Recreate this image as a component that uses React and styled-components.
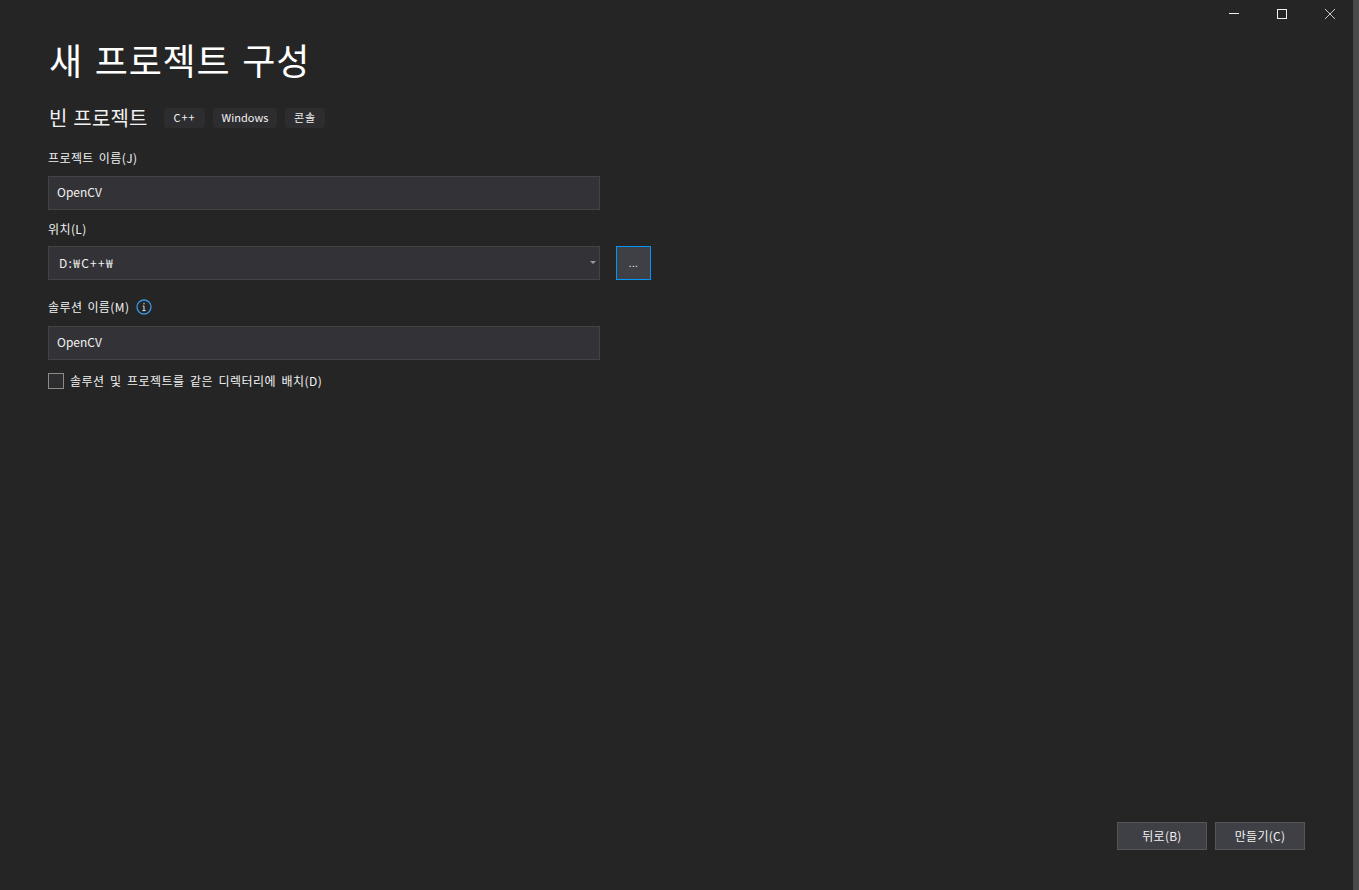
import React from "react";
import styled, { createGlobalStyle } from "styled-components";

const FONT = `"Noto Sans CJK KR", "Noto Sans", sans-serif`;

const Global = createGlobalStyle`
  html, body { margin: 0; padding: 0; background: #252526; }
  body { font-family: ${FONT}; color: #f1f1f1; overflow: hidden; }
  * { box-sizing: border-box; }
`;

const Window = styled.div`
  width: 1359px;
  height: 890px;
  background: #252526;
  display: flex;
  flex-direction: column;
  position: relative;
`;

const TitleBar = styled.div`
  position: absolute;
  top: 0;
  right: 5px;
  display: flex;
`;

const WinButton = styled.div`
  width: 48px;
  height: 28px;
  display: flex;
  align-items: center;
  justify-content: center;
`;

const Edge = styled.div`
  position: absolute;
  top: 0;
  right: 0;
  width: 6px;
  height: 100%;
  background: #4a4a4c;
`;

const Content = styled.main`
  flex: 1;
  padding: 35px 0 0 48px;
  display: flex;
  flex-direction: column;
`;

const Title = styled.h1`
  margin: 0 0 0 1px;
  font-size: 36px;
  line-height: 48px;
  font-weight: 400;
  letter-spacing: 0.8px;
  word-spacing: 3px;
  color: #fff;
`;

const Subtitle = styled.div`
  margin-top: 21px;
  display: flex;
  align-items: center;
  height: 28px;
`;

const SubName = styled.h2`
  margin: 0 8px 0 1px;
  font-size: 20px;
  line-height: 28px;
  font-weight: 400;
  letter-spacing: 0.2px;
  word-spacing: 1px;
  color: #f1f1f1;
  width: 107px;
  white-space: nowrap;
`;

const Tag = styled.span`
  width: ${p => p.$w}px;
  height: 20px;
  margin-right: 8px;
  border-radius: 4px;
  background: #2d2d30;
  font-size: 11px;
  line-height: 19px;
  text-align: center;
  letter-spacing: ${p => p.$spacing || 0}px;
  color: #f1f1f1;
`;

const Label = styled.label`
  display: flex;
  align-items: center;
  height: 18px;
  font-size: 12px;
  line-height: 18px;
  letter-spacing: 0.4px;
  word-spacing: 2px;
  color: #f1f1f1;
  margin-top: ${p => p.$top}px;
`;

const Field = styled.div`
  width: 552px;
  height: 34px;
  margin-top: ${p => p.$top}px;
  background: #333337;
  border: 1px solid #434346;
  padding: 0 8px 3px;
  display: flex;
  align-items: center;
  font-size: 12px;
  color: #f1f1f1;
`;

const LocationRow = styled.div`
  display: flex;
  margin-top: 8px;
  gap: 16px;
`;

const Combo = styled(Field)`
  margin-top: 0;
  padding: 0 3px 1px 10px;
  justify-content: space-between;
`;

const ComboValue = styled.span`
  letter-spacing: 1.3px;
`;

const Caret = styled.span`
  width: 0;
  height: 0;
  border-left: 3.5px solid transparent;
  border-right: 3.5px solid transparent;
  border-top: 3px solid #999;
`;

const Browse = styled.button`
  width: 35px;
  height: 34px;
  padding: 0;
  background: #3f3f46;
  border: 1px solid #0097fb;
  color: #f1f1f1;
  font: 10px/1 ${FONT};
  letter-spacing: 0.4px;
`;

const Info = styled.svg`
  margin-left: 7px;
`;

const CheckRow = styled.div`
  display: flex;
  align-items: center;
  gap: 6px;
  margin-top: 12px;
  font-size: 12px;
  line-height: 16px;
  letter-spacing: 0.45px;
  word-spacing: 2.4px;
  color: #f1f1f1;
`;

const CheckText = styled.span`
  padding-top: 1px;
`;

const Box = styled.span`
  width: 16px;
  height: 16px;
  background: #2d2d30;
  border: 1px solid #8a8a8a;
`;

const Footer = styled.footer`
  display: flex;
  justify-content: flex-end;
  gap: 8px;
  padding: 0 54px 40px 0;
`;

const ActionButton = styled.button`
  width: 90px;
  height: 28px;
  background: #3f3f46;
  border: 1px solid #555558;
  color: #f1f1f1;
  font: 12px/1 ${FONT};
  letter-spacing: 0.25px;
  padding: 0;
`;

export default function App() {
  return (
    <Window>
      <Global />
      <TitleBar>
        <WinButton>
          <svg width="12" height="12" viewBox="0 0 12 12"><path d="M1 5.5h10" stroke="#f1f1f1" fill="none" /></svg>
        </WinButton>
        <WinButton>
          <svg width="12" height="12" viewBox="0 0 12 12"><rect x="1.5" y="1.5" width="9" height="9" stroke="#f1f1f1" fill="none" /></svg>
        </WinButton>
        <WinButton>
          <svg width="12" height="12" viewBox="0 0 12 12"><path d="M1 1l10 10M11 1L1 11" stroke="#c8c8c8" fill="none" /></svg>
        </WinButton>
      </TitleBar>
      <Edge />
      <Content>
        <Title>새 프로젝트 구성</Title>
        <Subtitle>
          <SubName>빈 프로젝트</SubName>
          <Tag $w={41} $spacing={1}>C++</Tag>
          <Tag $w={64}>Windows</Tag>
          <Tag $w={40} $spacing={1}>콘솔</Tag>
        </Subtitle>
        <Label $top={17}>프로젝트 이름(J)</Label>
        <Field $top={9}>OpenCV</Field>
        <Label $top={10}>위치(L)</Label>
        <LocationRow>
          <Combo>
            <ComboValue>D:₩C++₩</ComboValue>
            <Caret />
          </Combo>
          <Browse>...</Browse>
        </LocationRow>
        <Label $top={18}>
          솔루션 이름(M)
          <Info width="16" height="16" viewBox="0 0 16 16">
            <circle cx="8" cy="8" r="7" fill="none" stroke="#3794e0" strokeWidth="1.3" />
            <path d="M8 3.8v1.6M8 7v4.6M6.8 7H8M6.4 11.6h3.2" stroke="#cfe4f5" fill="none" />
          </Info>
        </Label>
        <Field $top={10}>OpenCV</Field>
        <CheckRow>
          <Box />
          <CheckText>솔루션 및 프로젝트를 같은 디렉터리에 배치(D)</CheckText>
        </CheckRow>
      </Content>
      <Footer>
        <ActionButton>뒤로(B)</ActionButton>
        <ActionButton>만들기(C)</ActionButton>
      </Footer>
    </Window>
  );
}
